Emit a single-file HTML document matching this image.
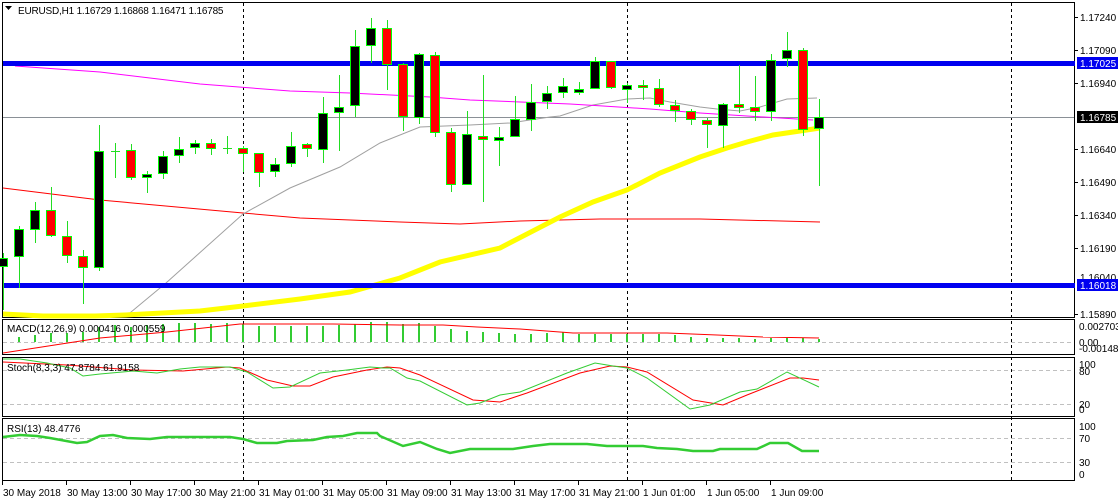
<!DOCTYPE html>
<html><head><meta charset="utf-8"><style>
html,body{margin:0;padding:0;background:#fff;width:1118px;height:502px;overflow:hidden}
svg{display:block}
text{font-family:"Liberation Sans",Arial,sans-serif;font-size:10px;fill:#000}
</style></head><body>
<svg width="1118" height="502" viewBox="0 0 1118 502" xmlns="http://www.w3.org/2000/svg">
<rect width="1118" height="502" fill="#fff"/>
<g fill="none" stroke="#000" stroke-width="1">
<rect x="2.5" y="2.5" width="1072" height="315"/>
<rect x="2.5" y="319.5" width="1072" height="35"/>
<rect x="2.5" y="357.5" width="1072" height="59"/>
<rect x="2.5" y="418.5" width="1072" height="62"/>
</g>
<g stroke="#c0c0c0" stroke-dasharray="4,3" stroke-width="1">
<line x1="3" y1="342.5" x2="1074" y2="342.5"/>
<line x1="3" y1="370.5" x2="1074" y2="370.5"/>
<line x1="3" y1="404.5" x2="1074" y2="404.5"/>
<line x1="3" y1="438.5" x2="1074" y2="438.5"/>
<line x1="3" y1="462.5" x2="1074" y2="462.5"/>
</g>
<g stroke="#000" stroke-dasharray="3,3" stroke-width="1">
<line x1="243.5" y1="3" x2="243.5" y2="482"/>
<line x1="627.5" y1="3" x2="627.5" y2="482"/>
<line x1="1011.5" y1="3" x2="1011.5" y2="482"/>
</g>
<line x1="3" y1="117.5" x2="1074" y2="117.5" stroke="#8a9096" stroke-width="1"/>
<polyline fill="none" stroke="#f00" stroke-width="1" points="3,188 100,200 243,213 300,218 400,222 460,224 520,221 600,219 700,219 820,222"/>
<polyline fill="none" stroke="#a0a0a0" stroke-width="1" points="125,317 166,283 243,214 290,188 340,167 380,143 420,127 470,125 510,123 550,117 560,116 593,105 627,99 650,98 670,102 700,107 717,109 740,111 760,107 787,99 817,98"/>
<polyline fill="none" stroke="#f0f" stroke-width="1" points="15,66 100,72 200,84 290,91 350,93 430,97 470,100 570,104 603,106 650,109 700,113 747,116 813,120"/>
<polyline fill="none" stroke="#ff0" stroke-width="5" points="3,314 43,316 95,316 125,315 200,311 243,306 300,299 350,292 400,278 440,262 500,248 560,217 593,202 627,190 660,173 700,157 727,148 747,142 773,135 800,131 820,128"/>
<rect x="3" y="61" width="1072" height="5" fill="#0000f0"/>
<rect x="3" y="283" width="1072" height="5" fill="#0000f0"/>
<g stroke="#22dd22" stroke-width="1">
<line x1="3.5" y1="253" x2="3.5" y2="310"/><line x1="19.5" y1="226" x2="19.5" y2="288"/><line x1="35.5" y1="202" x2="35.5" y2="243"/><line x1="51.5" y1="187" x2="51.5" y2="237"/><line x1="67.5" y1="221" x2="67.5" y2="263"/><line x1="83.5" y1="250" x2="83.5" y2="304"/><line x1="99.5" y1="125" x2="99.5" y2="271"/><line x1="115.5" y1="143" x2="115.5" y2="178"/><line x1="131.5" y1="144" x2="131.5" y2="180"/><line x1="147.5" y1="171" x2="147.5" y2="193"/><line x1="163.5" y1="151" x2="163.5" y2="179"/><line x1="179.5" y1="137" x2="179.5" y2="163"/><line x1="195.5" y1="140" x2="195.5" y2="154"/><line x1="211.5" y1="139" x2="211.5" y2="155"/><line x1="227.5" y1="136" x2="227.5" y2="154"/><line x1="243.5" y1="146" x2="243.5" y2="172"/><line x1="259.5" y1="153" x2="259.5" y2="187"/><line x1="275.5" y1="158" x2="275.5" y2="177"/><line x1="291.5" y1="132" x2="291.5" y2="167"/><line x1="307.5" y1="143" x2="307.5" y2="157"/><line x1="323.5" y1="97" x2="323.5" y2="163"/><line x1="339.5" y1="75" x2="339.5" y2="151"/><line x1="355.5" y1="30" x2="355.5" y2="117"/><line x1="371.5" y1="18" x2="371.5" y2="63"/><line x1="387.5" y1="20" x2="387.5" y2="90"/><line x1="403.5" y1="63" x2="403.5" y2="131"/><line x1="419.5" y1="53" x2="419.5" y2="124"/><line x1="435.5" y1="52" x2="435.5" y2="137"/><line x1="451.5" y1="128" x2="451.5" y2="192"/><line x1="467.5" y1="111" x2="467.5" y2="185"/><line x1="483.5" y1="75" x2="483.5" y2="202"/><line x1="499.5" y1="127" x2="499.5" y2="166"/><line x1="515.5" y1="96" x2="515.5" y2="137"/><line x1="531.5" y1="84" x2="531.5" y2="131"/><line x1="547.5" y1="86" x2="547.5" y2="109"/><line x1="563.5" y1="78" x2="563.5" y2="98"/><line x1="579.5" y1="82" x2="579.5" y2="95"/><line x1="595.5" y1="57" x2="595.5" y2="89"/><line x1="611.5" y1="61" x2="611.5" y2="89"/><line x1="627.5" y1="83" x2="627.5" y2="103"/><line x1="643.5" y1="80" x2="643.5" y2="100"/><line x1="659.5" y1="79" x2="659.5" y2="107"/><line x1="675.5" y1="100" x2="675.5" y2="122"/><line x1="691.5" y1="109" x2="691.5" y2="125"/><line x1="707.5" y1="118" x2="707.5" y2="148"/><line x1="723.5" y1="103" x2="723.5" y2="148"/><line x1="739.5" y1="65" x2="739.5" y2="113"/><line x1="755.5" y1="76" x2="755.5" y2="121"/><line x1="771.5" y1="54" x2="771.5" y2="121"/><line x1="787.5" y1="32" x2="787.5" y2="67"/><line x1="803.5" y1="48" x2="803.5" y2="136"/><line x1="819.5" y1="99" x2="819.5" y2="186"/>
<line x1="111" y1="151.5" x2="120" y2="151.5"/><line x1="223" y1="148.5" x2="232" y2="148.5"/>
</g>
<g stroke="#00ff00" stroke-width="1">
<g fill="#000">
<rect x="-1.5" y="258.5" width="9" height="8"/><rect x="14.5" y="229.5" width="9" height="27"/><rect x="30.5" y="210.5" width="9" height="19"/><rect x="94.5" y="151.5" width="9" height="116"/><rect x="142.5" y="174.5" width="9" height="3"/><rect x="158.5" y="156.5" width="9" height="17"/><rect x="174.5" y="149.5" width="9" height="6"/><rect x="190.5" y="143.5" width="9" height="4"/><rect x="270.5" y="164.5" width="9" height="7"/><rect x="286.5" y="146.5" width="9" height="17"/><rect x="318.5" y="113.5" width="9" height="36"/><rect x="334.5" y="107.5" width="9" height="5"/><rect x="350.5" y="46.5" width="9" height="59"/><rect x="366.5" y="28.5" width="9" height="17"/><rect x="414.5" y="54.5" width="9" height="63"/><rect x="462.5" y="134.5" width="9" height="50"/><rect x="494.5" y="137.5" width="9" height="3"/><rect x="510.5" y="119.5" width="9" height="17"/><rect x="526.5" y="102.5" width="9" height="17"/><rect x="542.5" y="93.5" width="9" height="8"/><rect x="558.5" y="86.5" width="9" height="6"/><rect x="574.5" y="89.5" width="9" height="3"/><rect x="590.5" y="61.5" width="9" height="27"/><rect x="622.5" y="85.5" width="9" height="4"/><rect x="718.5" y="104.5" width="9" height="21"/><rect x="766.5" y="60.5" width="9" height="51"/><rect x="782.5" y="50.5" width="9" height="8"/><rect x="814.5" y="117.5" width="9" height="11"/>
</g>
<g fill="#f00">
<rect x="46.5" y="210.5" width="9" height="25"/><rect x="62.5" y="236.5" width="9" height="19"/><rect x="78.5" y="256.5" width="9" height="11"/><rect x="126.5" y="150.5" width="9" height="27"/><rect x="206.5" y="143.5" width="9" height="5"/><rect x="238.5" y="148.5" width="9" height="5"/><rect x="254.5" y="153.5" width="9" height="19"/><rect x="302.5" y="144.5" width="9" height="4"/><rect x="382.5" y="28.5" width="9" height="36"/><rect x="398.5" y="64.5" width="9" height="52"/><rect x="430.5" y="55.5" width="9" height="77"/><rect x="446.5" y="132.5" width="9" height="52"/><rect x="478.5" y="136.5" width="9" height="3"/><rect x="606.5" y="61.5" width="9" height="26"/><rect x="638.5" y="85.5" width="9" height="2"/><rect x="654.5" y="88.5" width="9" height="16"/><rect x="670.5" y="105.5" width="9" height="5"/><rect x="686.5" y="111.5" width="9" height="8"/><rect x="702.5" y="120.5" width="9" height="4"/><rect x="734.5" y="104.5" width="9" height="3"/><rect x="750.5" y="107.5" width="9" height="4"/><rect x="798.5" y="50.5" width="9" height="79"/>
</g>
</g>
<g stroke="#33cc33" stroke-width="2">
<line x1="19" y1="342" x2="19" y2="337"/><line x1="35" y1="342" x2="35" y2="335"/><line x1="51" y1="342" x2="51" y2="333"/><line x1="67" y1="342" x2="67" y2="333"/><line x1="83" y1="342" x2="83" y2="332"/><line x1="99" y1="342" x2="99" y2="327"/><line x1="115" y1="342" x2="115" y2="325"/><line x1="131" y1="342" x2="131" y2="327"/><line x1="147" y1="342" x2="147" y2="325"/><line x1="163" y1="342" x2="163" y2="324"/><line x1="179" y1="342" x2="179" y2="323"/><line x1="195" y1="342" x2="195" y2="323"/><line x1="211" y1="342" x2="211" y2="324"/><line x1="227" y1="342" x2="227" y2="323"/><line x1="243" y1="342" x2="243" y2="324"/><line x1="259" y1="342" x2="259" y2="326"/><line x1="275" y1="342" x2="275" y2="326"/><line x1="291" y1="342" x2="291" y2="326"/><line x1="307" y1="342" x2="307" y2="326"/><line x1="323" y1="342" x2="323" y2="326"/><line x1="339" y1="342" x2="339" y2="325"/><line x1="355" y1="342" x2="355" y2="324"/><line x1="371" y1="342" x2="371" y2="322"/><line x1="387" y1="342" x2="387" y2="322"/><line x1="403" y1="342" x2="403" y2="324"/><line x1="419" y1="342" x2="419" y2="323"/><line x1="435" y1="342" x2="435" y2="326"/><line x1="451" y1="342" x2="451" y2="329"/><line x1="467" y1="342" x2="467" y2="331"/><line x1="483" y1="342" x2="483" y2="332"/><line x1="499" y1="342" x2="499" y2="333"/><line x1="515" y1="342" x2="515" y2="334"/><line x1="531" y1="342" x2="531" y2="334"/><line x1="547" y1="342" x2="547" y2="333"/><line x1="563" y1="342" x2="563" y2="332"/><line x1="579" y1="342" x2="579" y2="334"/><line x1="595" y1="342" x2="595" y2="334"/><line x1="611" y1="342" x2="611" y2="334"/><line x1="627" y1="342" x2="627" y2="334"/><line x1="643" y1="342" x2="643" y2="334"/><line x1="659" y1="342" x2="659" y2="334"/><line x1="675" y1="342" x2="675" y2="335"/><line x1="691" y1="342" x2="691" y2="337"/><line x1="707" y1="342" x2="707" y2="338"/><line x1="723" y1="342" x2="723" y2="338"/><line x1="739" y1="342" x2="739" y2="338"/><line x1="755" y1="342" x2="755" y2="339"/><line x1="771" y1="342" x2="771" y2="338"/><line x1="787" y1="342" x2="787" y2="338"/><line x1="803" y1="342" x2="803" y2="338"/><line x1="819" y1="342" x2="819" y2="339"/>
</g>
<polyline fill="none" stroke="#f00" stroke-width="1" points="3,353 100,338 167,332 240,324 333,324 400,325 443,325 477,327 520,329 573,333 667,333 717,335 763,337 819,338"/>
<polyline fill="none" stroke="#f00" stroke-width="1" points="3,362 67,365 133,370 183,371 227,367 240,368 267,380 293,386 310,386 333,377 367,370 387,367 400,368 420,375 473,400 500,402 527,393 580,373 610,366 627,367 647,372 693,400 723,405 747,395 790,378 803,378 819,380"/>
<polyline fill="none" stroke="#33cc33" stroke-width="1" points="3,359 20,359 47,363 70,368 83,376 100,374 133,371 157,373 180,369 200,367 230,367 247,372 273,388 290,387 320,373 347,370 370,367 383,368 390,368 407,378 420,381 467,405 480,403 500,395 520,392 567,373 595,363 613,366 627,368 647,378 690,409 710,405 740,392 757,389 787,372 819,387"/>
<polyline fill="none" stroke="#33cc33" stroke-width="2.5" points="3,437 20,435 37,436 50,438 77,443 87,442 100,436 113,435 127,438 150,439 167,437 230,437 243,439 257,443 277,443 287,441 313,440 327,437 343,436 357,433 377,433 380,436 403,446 420,442 437,449 450,453 470,449 513,449 533,446 550,444 587,444 607,446 643,446 657,448 677,449 693,451 713,451 720,449 757,449 770,443 788,443 802,451 819,451"/>
<path d="M5,6 L12,6 L8.5,10 Z" fill="#000"/>
<text x="18" y="14" style="letter-spacing:-0.2px">EURUSD,H1 1.16729 1.16868 1.16471 1.16785</text>
<text x="7" y="332">MACD(12,26,9) 0.000416 0.000559</text>
<text x="7" y="371">Stoch(8,3,3) 47.8784 61.9158</text>
<text x="7" y="432">RSI(13) 48.4776</text>
<g stroke="#000" stroke-width="1">
<line x1="1075" y1="17.5" x2="1078" y2="17.5"/><line x1="1075" y1="50.5" x2="1078" y2="50.5"/><line x1="1075" y1="83.5" x2="1078" y2="83.5"/><line x1="1075" y1="149.5" x2="1078" y2="149.5"/><line x1="1075" y1="182.5" x2="1078" y2="182.5"/><line x1="1075" y1="215.5" x2="1078" y2="215.5"/><line x1="1075" y1="248.5" x2="1078" y2="248.5"/><line x1="1075" y1="314.5" x2="1078" y2="314.5"/>
</g>
<text x="1080" y="21">1.17240</text>
<text x="1080" y="54">1.17090</text>
<text x="1080" y="87">1.16940</text>
<text x="1080" y="153">1.16640</text>
<text x="1080" y="186">1.16490</text>
<text x="1080" y="219">1.16340</text>
<text x="1080" y="252">1.16190</text>
<text x="1080" y="281">1.16040</text>
<text x="1080" y="318">1.15890</text>
<rect x="1077" y="57" width="41" height="12" fill="#0000f0"/>
<text x="1080" y="67" style="fill:#fff">1.17025</text>
<rect x="1077" y="111" width="41" height="12" fill="#000"/>
<text x="1080" y="121" style="fill:#fff">1.16785</text>
<rect x="1077" y="279" width="41" height="12" fill="#0000f0"/>
<text x="1080" y="289" style="fill:#fff">1.16018</text>
<text x="1079" y="330">0.002703</text>
<text x="1079" y="346">0.00</text>
<text x="1079" y="352">-0.00148</text>
<text x="1079" y="368">100</text>
<text x="1079" y="375">80</text>
<text x="1079" y="408">20</text>
<text x="1079" y="413">0</text>
<text x="1079" y="430">100</text>
<text x="1079" y="442">70</text>
<text x="1079" y="466">30</text>
<text x="1079" y="478">0</text>
<g stroke="#000" stroke-width="1">
<line x1="2.5" y1="481" x2="2.5" y2="485"/><line x1="66.5" y1="481" x2="66.5" y2="485"/><line x1="130.5" y1="481" x2="130.5" y2="485"/><line x1="194.5" y1="481" x2="194.5" y2="485"/><line x1="258.5" y1="481" x2="258.5" y2="485"/><line x1="322.5" y1="481" x2="322.5" y2="485"/><line x1="386.5" y1="481" x2="386.5" y2="485"/><line x1="450.5" y1="481" x2="450.5" y2="485"/><line x1="514.5" y1="481" x2="514.5" y2="485"/><line x1="578.5" y1="481" x2="578.5" y2="485"/><line x1="642.5" y1="481" x2="642.5" y2="485"/><line x1="706.5" y1="481" x2="706.5" y2="485"/><line x1="770.5" y1="481" x2="770.5" y2="485"/>
</g>
<text x="3" y="496">30 May 2018</text>
<text x="67" y="496">30 May 13:00</text>
<text x="131" y="496">30 May 17:00</text>
<text x="195" y="496">30 May 21:00</text>
<text x="259" y="496">31 May 01:00</text>
<text x="323" y="496">31 May 05:00</text>
<text x="387" y="496">31 May 09:00</text>
<text x="451" y="496">31 May 13:00</text>
<text x="515" y="496">31 May 17:00</text>
<text x="579" y="496">31 May 21:00</text>
<text x="643" y="496">1 Jun 01:00</text>
<text x="707" y="496">1 Jun 05:00</text>
<text x="771" y="496">1 Jun 09:00</text>
</svg>
</body></html>
